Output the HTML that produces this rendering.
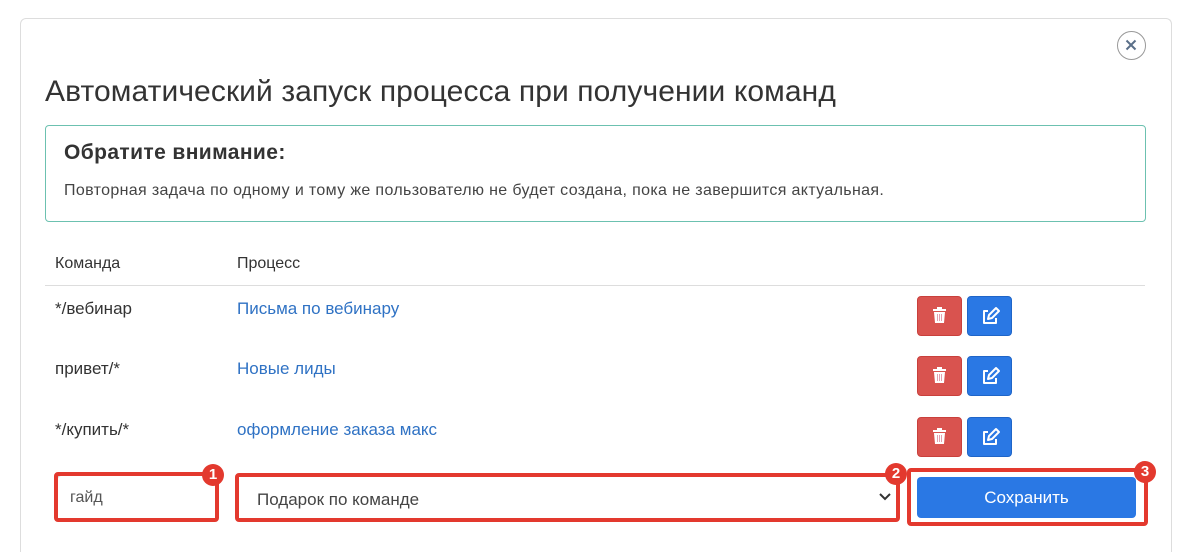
<!DOCTYPE html><html><head><meta charset="utf-8"><style>
html,body{margin:0;width:1200px;height:552px;overflow:hidden}
body{background:#fff;font-family:"Liberation Sans",sans-serif;position:relative;color:#333}
.card{position:absolute;left:20px;top:18px;width:1150px;height:533px;border:1px solid #ddd;border-bottom:none;border-radius:6px 6px 0 0}
.abs{position:absolute}
h1{position:absolute;left:45px;top:75px;margin:0;font-weight:normal;font-size:30px;letter-spacing:0.1px;color:#333}
.note{position:absolute;left:45px;top:125px;width:1099px;height:95px;border:1px solid #6cc1b0;border-radius:4px}
.btn{position:absolute;width:45px;height:40px;border-radius:4px}
.red{background:#d9534f;border:1px solid #c9403c;box-sizing:border-box}
.blue{background:#2a78e4;border:1px solid #1f65c8;box-sizing:border-box}
.lnk{color:#2f72c4;font-size:17px}
.badge{position:absolute;width:22px;height:22px;border-radius:50%;background:#e3392e;color:#fff;font-weight:bold;font-size:15px;text-align:center;line-height:22px}
.hl{position:absolute;border:4px solid #e3392e;border-radius:4px;box-sizing:border-box}
</style></head><body>
<div class="card"></div>
<div class="abs" style="left:1117px;top:31px;width:29px;height:29px;border:1.5px solid #999;border-radius:50%;box-sizing:border-box"><svg width="26" height="26" viewBox="0 0 26 26"><path d="M8.5 8.5L17.5 17.5M17.5 8.5L8.5 17.5" stroke="#5a6f88" stroke-width="2"/></svg></div>
<h1>Автоматический запуск процесса при получении команд</h1>
<div class="note">
<div class="abs" style="left:18px;top:15px;font-size:21px;letter-spacing:0.4px;font-weight:bold;color:#333">Обратите внимание:</div>
<div class="abs" style="left:18px;top:56px;font-size:16px;letter-spacing:0.35px;color:#444">Повторная задача по одному и тому же пользователю не будет создана, пока не завершится актуальная.</div>
</div>
<div class="abs" style="left:55px;top:255px;font-size:16px">Команда</div>
<div class="abs" style="left:237px;top:255px;font-size:16px">Процесс</div>
<div class="abs" style="left:45px;top:285px;width:1100px;height:1px;background:#ddd"></div>
<div class="abs" style="left:55px;top:299px;font-size:17px">*/вебинар</div>
<div class="abs lnk" style="left:237px;top:299px">Письма по вебинару</div>
<div class="abs" style="left:55px;top:359px;font-size:17px">привет/*</div>
<div class="abs lnk" style="left:237px;top:359px">Новые лиды</div>
<div class="abs" style="left:55px;top:420px;font-size:17px">*/купить/*</div>
<div class="abs lnk" style="left:237px;top:420px">оформление заказа макс</div>
<div id="btns"></div>
<script>
var h='';[296,356,417].forEach(function(y){
h+='<div class="btn red" style="left:917px;top:'+y+'px"><svg width="43" height="38" viewBox="0 0 43 38"><rect x="15" y="12" width="13" height="2" fill="#fff"/><rect x="19" y="10" width="5" height="2" fill="#fff"/><path d="M16 15h11l-1 11h-9z" fill="#fff"/><path d="M19.5 17v7M21.5 17v7M23.5 17v7" stroke="#e6a0b0" stroke-width="1"/></svg></div>';
h+='<div class="btn blue" style="left:967px;top:'+y+'px"><svg width="43" height="38" viewBox="0 0 43 38"><path d="M20 14h-4v12h12v-5" fill="none" stroke="#fff" stroke-width="2" stroke-linejoin="round"/><path d="M20 22l1-4 7-7 3 3-7 7z" fill="none" stroke="#fff" stroke-width="2" stroke-linejoin="round"/></svg></div>';});
document.getElementById('btns').innerHTML=h;
</script>
<div class="abs" style="left:57px;top:475px;width:158px;height:44px;border:1px solid #ccc;border-radius:4px"></div>
<div class="hl" style="left:54px;top:472px;width:165px;height:50px"></div>
<div class="abs" style="left:70px;top:489px;font-size:16px;color:#555">гайд</div>
<div class="badge" style="left:202px;top:464px">1</div>
<div class="hl" style="left:235px;top:473px;width:665px;height:49px"></div>
<div class="abs" style="left:257px;top:490px;font-size:17px;color:#444">Подарок по команде</div>
<svg class="abs" style="left:879px;top:492px" width="12" height="10"><path d="M1 2l5 5 5-5" fill="none" stroke="#333" stroke-width="2"/></svg>
<div class="badge" style="left:885px;top:463px">2</div>
<div class="hl" style="left:907px;top:468px;width:241px;height:58px"></div>
<div class="abs" style="left:917px;top:477px;width:219px;height:41px;background:#2a78e4;border-radius:4px;color:#fff;font-size:17px;text-align:center;line-height:41px">Сохранить</div>
<div class="badge" style="left:1134px;top:461px">3</div>
</body></html>
